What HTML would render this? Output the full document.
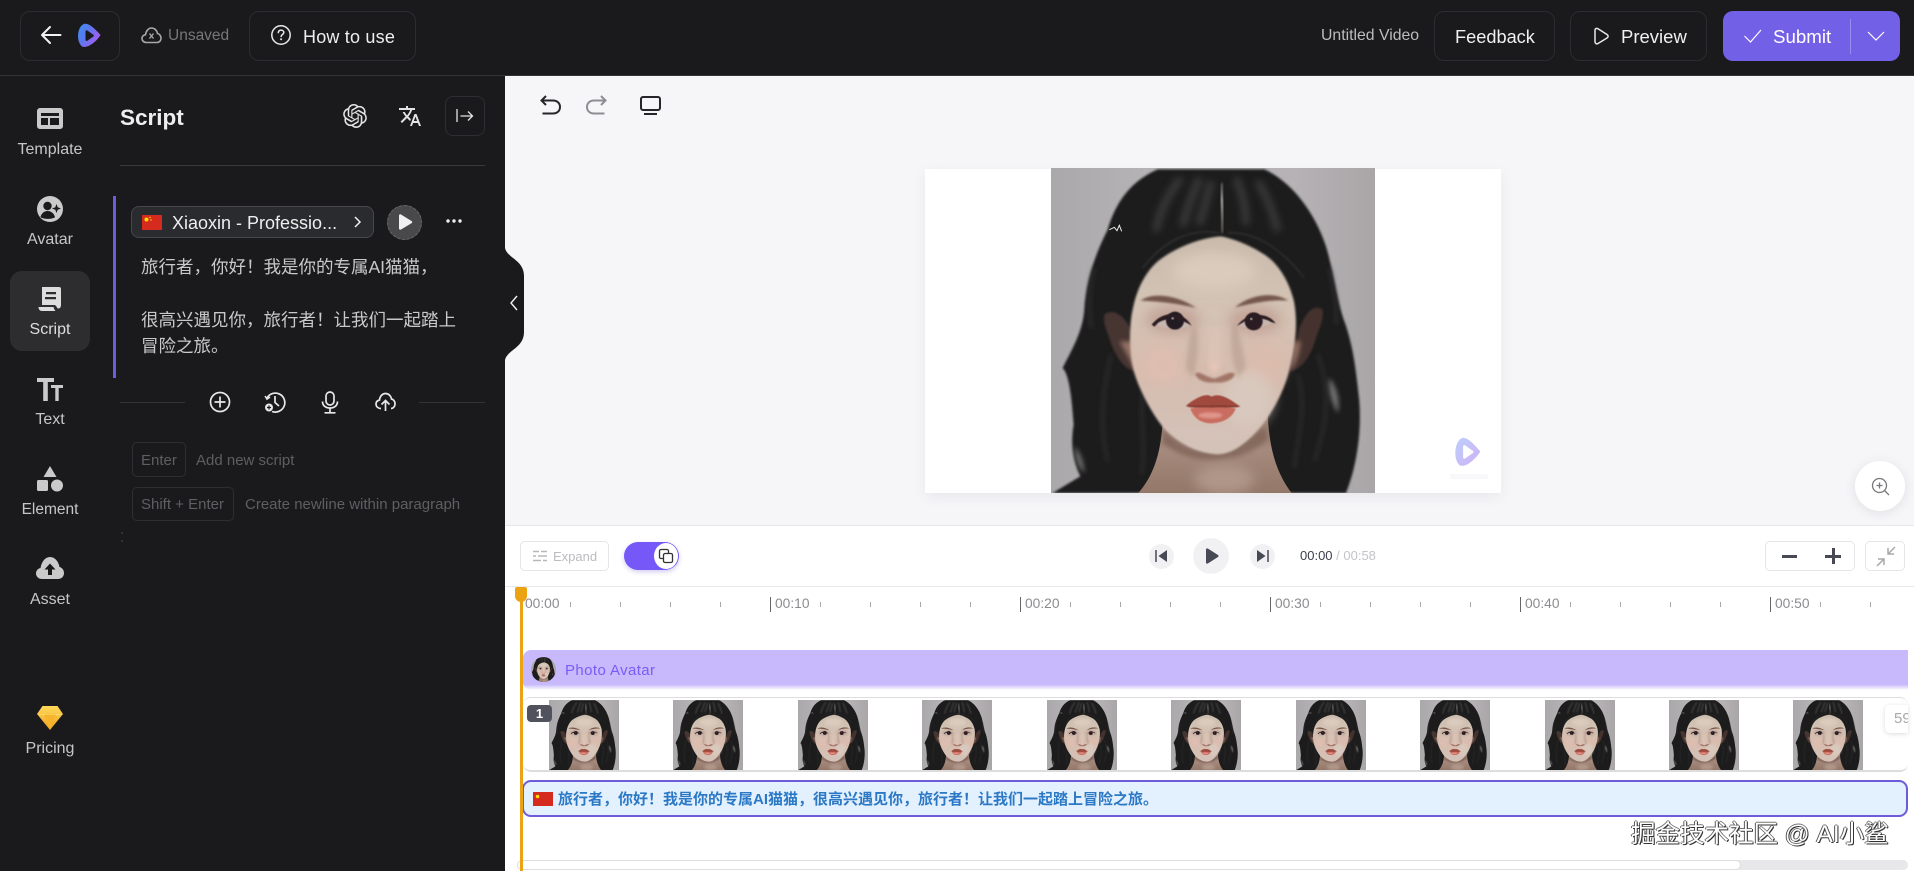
<!DOCTYPE html>
<html lang="en"><head><meta charset="utf-8"><title>Script editor</title>
<style>
*{box-sizing:border-box}
html,body{margin:0;padding:0;width:1914px;height:871px;overflow:hidden;background:#fff;font-family:"Liberation Sans","Noto Sans CJK SC",sans-serif}
.a{position:absolute}
.t{position:absolute;white-space:nowrap;line-height:20px;height:20px}
.btn{position:absolute;border:1px solid #2c2c30;border-radius:10px}
.side{position:absolute;left:0;width:100px;text-align:center;color:#c6c6c6;font-size:16px;line-height:20px;height:20px}
svg{position:absolute;overflow:visible}
</style></head><body>
<svg width="0" height="0" style="position:absolute"><defs>
<linearGradient id="lg" x1="0" y1="0" x2="1" y2=".6"><stop offset="0" stop-color="#3f8ff0"/><stop offset=".45" stop-color="#5a78ee"/><stop offset="1" stop-color="#a85cf2"/></linearGradient>
<linearGradient id="lg2" x1="0" y1="0" x2="1" y2="1"><stop offset="0" stop-color="#bcd0fa"/><stop offset="1" stop-color="#cfb0f6"/></linearGradient>
<linearGradient id="dia" x1="0" y1="0" x2="0" y2="1"><stop offset="0" stop-color="#ffd95a"/><stop offset="1" stop-color="#f0a020"/></linearGradient>
<linearGradient id="bgp" x1="0" y1="0" x2="1" y2="0"><stop offset="0" stop-color="#aaa8aa"/><stop offset=".3" stop-color="#b6b3b6"/><stop offset=".75" stop-color="#b6b2b5"/><stop offset="1" stop-color="#a9a6a8"/></linearGradient>
<linearGradient id="skin" x1="0" y1="0" x2="0" y2="1"><stop offset="0" stop-color="#c9baac"/><stop offset=".3" stop-color="#d3c3b5"/><stop offset=".6" stop-color="#d6bcae"/><stop offset="1" stop-color="#d4c3ba"/></linearGradient>
<linearGradient id="neck" x1="0" y1="0" x2="0" y2="1"><stop offset="0" stop-color="#8c7064"/><stop offset=".45" stop-color="#a58a7d"/><stop offset="1" stop-color="#937869"/></linearGradient>
<linearGradient id="parting" x1="0" y1="0" x2="0" y2="1"><stop offset="0" stop-color="#444"/><stop offset=".35" stop-color="#8f8d89"/><stop offset="1" stop-color="#4a4440"/></linearGradient>
<filter id="b1" x="-20%" y="-20%" width="140%" height="140%"><feGaussianBlur stdDeviation="1.200"/></filter>
<filter id="b2" x="-20%" y="-20%" width="140%" height="140%"><feGaussianBlur stdDeviation="3"/></filter>
<filter id="b5" x="-40%" y="-40%" width="180%" height="180%"><feGaussianBlur stdDeviation="7"/></filter>
<filter id="b8" x="-40%" y="-40%" width="180%" height="180%"><feGaussianBlur stdDeviation="11"/></filter>
<filter id="b12" x="-60%" y="-60%" width="220%" height="220%"><feGaussianBlur stdDeviation="18"/></filter>
<symbol id="face" viewBox="0 0 972 975" preserveAspectRatio="none">
<rect width="972" height="975" fill="url(#bgp)"/>
<path filter="url(#b2)" fill="#1a1a1c" d="M320,4 C240,40 195,100 170,185 C130,265 105,340 100,425 C96,490 60,550 35,600 C55,620 62,690 68,770 C58,830 66,880 88,925 L5,975 L885,975 C915,900 932,800 925,700 C915,610 908,540 882,465 C860,410 850,320 825,235 C790,130 720,40 640,4 Z"/>
<g fill="#a8a6a8" filter="url(#b5)" opacity=".6"><path d="M835,630 C860,660 868,700 860,735 C842,705 828,665 835,630Z"/><path d="M72,835 C92,862 100,890 100,915 C82,898 70,870 72,835Z"/></g>
<g fill="none" stroke="#38383a" stroke-width="8" filter="url(#b5)" opacity=".7"><path d="M180,560 C160,660 140,760 170,880"/><path d="M800,560 C840,660 830,760 790,880"/><path d="M130,300 C110,360 115,430 120,480"/><path d="M835,300 C850,360 860,420 855,470"/><path d="M740,620 C770,720 740,800 730,900"/><path d="M280,650 C260,750 290,830 270,920"/></g>
<path fill="url(#neck)" d="M335,760 C330,850 310,920 262,975 L722,975 C680,920 655,850 650,740 Z"/>
<path fill="#7a5e52" filter="url(#b5)" d="M340,790 C420,870 540,870 640,770 L650,815 C560,895 420,895 335,825 Z" opacity=".7"/>
<ellipse cx="520" cy="935" rx="90" ry="45" fill="#b89f92" opacity=".75" filter="url(#b12)"/>
<path fill="#473530" filter="url(#b2)" d="M160,440 C185,420 225,440 245,500 L258,610 C225,610 195,570 178,520 C170,490 155,470 160,440Z"/>
<path fill="#45332d" filter="url(#b2)" d="M815,425 C795,410 770,420 745,480 L715,610 C755,605 780,560 795,510 C805,480 818,460 815,425Z"/>
<path fill="#a5806f" opacity=".8" filter="url(#b5)" d="M205,520 C225,550 240,585 255,605 L250,520Z"/>
<path fill="#a5806f" opacity=".75" filter="url(#b5)" d="M750,520 C745,560 735,590 718,608 L725,520Z"/>
<path fill="url(#skin)" filter="url(#b2)" d="M510,205 C450,208 370,240 320,280 C280,315 256,370 246,420 C234,470 234,550 246,600 C258,650 296,730 342,785 C382,825 440,857 500,859 C540,859 582,830 622,785 C668,730 698,670 714,610 C732,540 742,470 729,400 C714,340 684,290 644,262 C604,235 550,212 510,205Z"/>
<ellipse cx="490" cy="310" rx="125" ry="55" fill="#dacbbd" filter="url(#b12)"/>
<ellipse cx="335" cy="590" rx="62" ry="62" fill="#dfbeb0" opacity=".85" filter="url(#b12)"/>
<ellipse cx="640" cy="590" rx="58" ry="62" fill="#dcbcad" opacity=".85" filter="url(#b12)"/>
<ellipse cx="590" cy="690" rx="75" ry="85" fill="#d9cbc0" opacity=".8" filter="url(#b12)"/>
<ellipse cx="365" cy="455" rx="80" ry="40" fill="#bf9f92" opacity=".85" filter="url(#b12)"/>
<ellipse cx="612" cy="455" rx="78" ry="40" fill="#bf9f92" opacity=".85" filter="url(#b12)"/>
<path fill="#ad9485" opacity=".5" filter="url(#b5)" d="M432,470 C450,520 440,580 425,630 L405,600 C410,540 415,490 432,470Z"/>
<path fill="#ad9485" opacity=".5" filter="url(#b5)" d="M548,460 C530,520 545,580 560,630 L585,600 C575,540 565,490 548,460Z"/>
<path fill="#dcc4b6" opacity=".8" filter="url(#b5)" d="M472,480 L508,480 L512,590 L470,590Z"/>
<ellipse cx="490" cy="596" rx="16" ry="20" fill="#e4c5b7" filter="url(#b5)"/>
<path fill="#a07668" filter="url(#b2)" d="M432,618 C442,606 455,622 490,632 C520,622 538,606 552,618 C545,640 512,646 490,643 C465,646 440,638 432,618Z"/>
<path fill="#75574c" filter="url(#b2)" d="M268,398 C310,370 380,383 436,420 C385,408 325,400 268,398Z"/>
<path fill="#75574c" filter="url(#b2)" d="M552,418 C600,378 670,370 712,398 C660,394 612,404 552,418Z"/>
<path fill="#c7b5af" filter="url(#b1)" d="M308,464 C340,438 395,438 420,472 C390,488 335,488 308,464Z"/>
<path fill="#c7b5af" filter="url(#b1)" d="M562,472 C590,440 640,440 668,460 C640,482 590,484 562,472Z"/>
<circle cx="372" cy="458" r="27" fill="#241a22" filter="url(#b1)"/><circle cx="608" cy="460" r="27" fill="#2c1e20" filter="url(#b1)"/>
<path fill="#2a1e20" filter="url(#b1)" d="M302,470 C335,426 398,428 422,474 C392,450 345,448 322,464 L310,476Z"/>
<path fill="#2a1e20" filter="url(#b1)" d="M558,474 C590,430 650,432 674,466 L660,462 C640,448 600,448 578,462 Z"/>
<circle cx="365" cy="451" r="4" fill="#bbb" opacity=".6"/><circle cx="601" cy="453" r="4" fill="#bbb" opacity=".6"/>
<path fill="#c96d60" filter="url(#b1)" d="M418,722 C460,712 520,712 554,722 C545,750 512,766 480,766 C450,766 428,750 418,722Z"/>
<path fill="#a04a3e" filter="url(#b1)" d="M404,714 C430,692 465,672 482,686 C505,672 540,695 568,716 C520,722 500,716 480,720 C455,716 430,722 404,714Z"/>
<ellipse cx="478" cy="742" rx="36" ry="9" fill="#e0958a" filter="url(#b2)"/>
<path d="M412,716 C450,720 465,710 482,714 C505,710 530,718 562,716" fill="none" stroke="#6e3029" stroke-width="4" filter="url(#b2)"/>
<g fill="none" stroke="#5e5e5e" stroke-width="20" opacity=".5" filter="url(#b8)"><path d="M390,30 C350,80 325,130 315,190"/><path d="M445,30 C425,80 405,130 395,175"/><path d="M480,40 C470,90 455,130 445,170"/><path d="M555,30 C575,80 585,120 585,170"/><path d="M620,40 C650,90 665,130 680,190"/></g>
<g fill="none" stroke="#3a3a3c" stroke-width="3" filter="url(#b2)"><path d="M505,195 C420,180 340,215 275,300"/><path d="M530,195 C610,190 690,240 760,330"/></g>
<path d="M512,45 C506,90 520,130 515,195" stroke="url(#parting)" stroke-width="13" fill="none" filter="url(#b2)"/>
<path d="M175,185 L190,178 L198,188 L205,172 L212,190" fill="none" stroke="#eee" stroke-width="3"/>
</symbol>
</defs></svg>

<!-- top bar -->
<div class="a" style="left:0;top:0;width:1914px;height:76px;background:#1a1a1d;border-bottom:1px solid #333336"></div>
<div class="btn" style="left:20px;top:11px;width:100px;height:50px"></div>
<svg style="left:40px;top:24px" width="22" height="22" viewBox="0 0 22 22"><path d="M20.500 11H2M10 3L2 11l8 8" fill="none" stroke="#f2f2f2" stroke-width="2" stroke-linecap="round" stroke-linejoin="round"/></svg>
<svg style="left:76px;top:23px" width="25" height="25" viewBox="0 0 25 25"><path d="M8 1C1.500 3-.5 18 6 23.500c5.500 2.500 15-5.500 18.500-11.500C19.500 6.500 13-.5 8 1Z" fill="url(#lg)"/><path d="M9.500 8.500c0-1 1-1.500 1.800-1l6 4.200c.8.500.8 1.300 0 1.800l-6 4.200c-.8.500-1.800 0-1.800-1Z" fill="#1a1a1d"/></svg>
<svg style="left:141px;top:25px" width="21" height="21" viewBox="0 0 21 21"><path d="M5.500 17.500C2.500 17.500 1 15.500 1 13.500c0-2 1.500-3.500 3.500-3.800C5 6 7.500 3 10.500 3c3.200 0 5.500 2.500 6 5.500 2 .3 3.500 2.500 3.500 4.700 0 2.300-1.500 4.300-4 4.300Z" fill="none" stroke="#a8a8a8" stroke-width="1.600"/><path d="M8.500 8.500l4 5M12.500 8.500l-4 5" stroke="#a8a8a8" stroke-width="1.400"/></svg>
<div class="t" style="left:168px;top:26px;font-size:15.500px;color:#77777a">Unsaved</div>
<div class="btn" style="left:249px;top:11px;width:167px;height:50px"></div>
<svg style="left:271px;top:25px" width="20" height="20" viewBox="0 0 20 20"><circle cx="10" cy="10" r="9.200" fill="none" stroke="#e8e8e8" stroke-width="1.500"/><path d="M7.300 7.600c.2-1.600 1.400-2.500 2.800-2.500 1.500 0 2.700 1 2.700 2.400 0 2-2.700 2-2.700 4" fill="none" stroke="#e8e8e8" stroke-width="1.500" stroke-linecap="round"/><circle cx="10.100" cy="14.300" r="1" fill="#e8e8e8"/></svg>
<div class="t" style="left:303px;top:27px;font-size:18px;color:#eee;letter-spacing:.2px">How to use</div>

<div class="t" style="left:1321px;top:26px;font-size:15.800px;color:#bcbcbc">Untitled Video</div>
<div class="btn" style="left:1434px;top:11px;width:121px;height:50px"></div>
<div class="t" style="left:1455px;top:27px;font-size:18.200px;color:#f0f0f0">Feedback</div>
<div class="btn" style="left:1570px;top:11px;width:137px;height:50px"></div>
<svg style="left:1593px;top:27px" width="17" height="18" viewBox="0 0 17 18"><path d="M2 3.500C2 1.500 3.500 1 5 1.800l9 5.700c1.500 1 1.500 2.500 0 3.500l-9 5.500C3.500 17.300 2 16.500 2 14.800Z" fill="none" stroke="#e8e8e8" stroke-width="1.500"/></svg>
<div class="t" style="left:1621px;top:27px;font-size:18.500px;color:#f0f0f0">Preview</div>
<div class="a" style="left:1723px;top:11px;width:177px;height:50px;background:#7260e6;border-radius:10px"></div>
<div class="a" style="left:1850px;top:19px;width:1px;height:35px;background:#9a8df0"></div>
<svg style="left:1743px;top:27px" width="20" height="18" viewBox="0 0 20 18"><path d="M1.500 9l6 6L18 3" fill="none" stroke="#fff" stroke-width="1.200"/></svg>
<div class="t" style="left:1773px;top:27px;font-size:18.700px;color:#fff">Submit</div>
<svg style="left:1866px;top:29px" width="20" height="14" viewBox="0 0 20 14"><path d="M2 3l8 8 8-8" fill="none" stroke="#fff" stroke-width="1.200"/></svg>

<!-- left -->
<div class="a" style="left:0;top:76px;width:505px;height:795px;background:#1a1a1d"></div>
<div class="a" style="left:10px;top:271px;width:80px;height:80px;background:#2d2d30;border-radius:12px"></div>
<svg style="left:37px;top:108px" width="26" height="22" viewBox="0 0 26 22"><rect width="26" height="21" rx="3" fill="#cacaca"/><path d="M4 5h18v3H4ZM4 10h7v7H4ZM13 10h9v7h-9Z" fill="#1a1a1d"/></svg>
<div class="side" style="top:140px">Template</div>
<svg style="left:37px;top:196px" width="26" height="26" viewBox="0 0 26 26"><circle cx="13" cy="13" r="13" fill="#cacaca"/><circle cx="10.500" cy="10" r="4.200" fill="#1a1a1d"/><path d="M3.500 21c1-4 4-6 7-6s6 1.500 7.500 6c-2 2.500-12 2.500-14.500 0Z" fill="#1a1a1d"/><path d="M19.500 8l1.200 3.300 3.300 1.200-3.300 1.200-1.200 3.300-1.200-3.300-3.300-1.200 3.300-1.200Z" fill="#1a1a1d"/></svg>
<div class="side" style="top:230px">Avatar</div>
<svg style="left:37px;top:285px" width="26" height="28" viewBox="0 0 26 28"><path d="M5 2h17c1.500 0 2 1 2 2v16c0 2-1 3.500-2.500 3.500-1 0-1.500-.5-2-2L18 20H5Z" fill="#ddd"/><path d="M9 7h10v2.200H9ZM8 12h11v2.200H8Z" fill="#2d2d30"/><path d="M1.500 22h15c.5 2 1.200 3 2 4H5c-2 0-3.500-1.500-3.500-4Z" fill="#ddd"/></svg>
<div class="side" style="top:320px;color:#ddd">Script</div>
<svg style="left:37px;top:378px" width="26" height="23" viewBox="0 0 26 23"><path d="M0 0h17v4h-6.200v19H6.200V4H0ZM14 7h12v3h-4.300v13h-3.400V10H14Z" fill="#cacaca"/></svg>
<div class="side" style="top:410px">Text</div>
<svg style="left:37px;top:466px" width="26" height="26" viewBox="0 0 26 26"><path d="M13 0l6.500 11h-13Z" fill="#cacaca"/><rect y="14" width="11" height="11" rx="1.500" fill="#cacaca"/><circle cx="20" cy="19.500" r="6" fill="#cacaca"/></svg>
<div class="side" style="top:500px;font-size:15.500px">Element</div>
<svg style="left:36px;top:557px" width="28" height="22" viewBox="0 0 28 22"><path d="M6 22C2.500 22 0 19.500 0 16.500 0 13.500 2 11.500 4.500 11 5.500 5 9 0 14 0c5 0 8.500 4.500 9.500 10 2.500.5 4.500 3 4.500 6 0 3.500-2.500 6-6 6Z" fill="#cacaca"/><path d="M14 6.500l5.500 6H16V18h-4v-5.500H8.500Z" fill="#1a1a1d"/></svg>
<div class="side" style="top:590px">Asset</div>
<svg style="left:37px;top:706px" width="26" height="24" viewBox="0 0 26 24"><path d="M5.500 0h15L26 8 13 24 0 8Z" fill="url(#dia)"/><path d="M0 8h26L13 10Z" fill="#ffe98f" opacity=".8"/><path d="M7 8.500h12L13 24Z" fill="#f6b52c"/></svg>
<div class="side" style="top:739px">Pricing</div>

<div class="t" style="left:120px;top:105px;height:26px;line-height:26px;font-size:22.500px;font-weight:700;color:#eee">Script</div>
<svg style="left:343px;top:104px" width="24" height="24" viewBox="0 0 24 24"><path fill="#e4e4e4" d="M22.2819 9.8211a5.9847 5.9847 0 0 0-.5157-4.9108 6.0462 6.0462 0 0 0-6.5098-2.9A6.0651 6.0651 0 0 0 4.9807 4.1818a5.9847 5.9847 0 0 0-3.9977 2.9 6.0462 6.0462 0 0 0 .7427 7.0966 5.98 5.98 0 0 0 .511 4.9107 6.051 6.051 0 0 0 6.5146 2.9001A5.9847 5.9847 0 0 0 13.2599 24a6.0557 6.0557 0 0 0 5.7718-4.2058 5.9894 5.9894 0 0 0 3.9977-2.9001 6.0557 6.0557 0 0 0-.7475-7.0729zm-9.022 12.6081a4.4755 4.4755 0 0 1-2.8764-1.0408l.1419-.0804 4.7783-2.7582a.7948.7948 0 0 0 .3927-.6813v-6.7369l2.02 1.1686a.071.071 0 0 1 .038.052v5.5826a4.504 4.504 0 0 1-4.4945 4.4944zm-9.6607-4.1254a4.4708 4.4708 0 0 1-.5346-3.0137l.142.0852 4.783 2.7582a.7712.7712 0 0 0 .7806 0l5.8428-3.3685v2.3324a.0804.0804 0 0 1-.0332.0615L9.74 19.9502a4.4992 4.4992 0 0 1-6.1408-1.6464zM2.3408 7.8956a4.485 4.485 0 0 1 2.3655-1.9728V11.6a.7664.7664 0 0 0 .3879.6765l5.8144 3.3543-2.0201 1.1685a.0757.0757 0 0 1-.071 0l-4.8303-2.7865A4.504 4.504 0 0 1 2.3408 7.872zm16.5963 3.8558L13.1038 8.364 15.1192 7.2a.0757.0757 0 0 1 .071 0l4.8303 2.7913a4.4944 4.4944 0 0 1-.6765 8.1042v-5.6772a.79.79 0 0 0-.407-.667zm2.0107-3.0231l-.142-.0852-4.7735-2.7818a.7759.7759 0 0 0-.7854 0L9.409 9.2297V6.8974a.0662.0662 0 0 1 .0284-.0615l4.8303-2.7866a4.4992 4.4992 0 0 1 6.6802 4.66zM8.3065 12.863l-2.02-1.1638a.0804.0804 0 0 1-.038-.0567V6.0742a4.4992 4.4992 0 0 1 7.3757-3.4537l-.142.0805L8.704 5.459a.7948.7948 0 0 0-.3927.6813zm1.0976-2.3654l2.602-1.4998 2.6069 1.4998v2.9994l-2.5974 1.4997-2.6067-1.4997Z"/></svg>
<svg style="left:398px;top:104px" width="24" height="24" viewBox="0 0 24 24"><path fill="#e4e4e4" d="M12.870 15.070l-2.540-2.510.03-.03c1.740-1.940 2.980-4.170 3.710-6.530H17V4h-7V2H8v2H1v1.990h11.170C11.500 7.920 10.440 9.750 9 11.350 8.070 10.320 7.300 9.190 6.690 8h-2c.73 1.630 1.730 3.170 2.980 4.560l-5.090 5.020L4 19l5-5 3.110 3.110.76-2.040zM18.500 10h-2L12 22h2l1.120-3h4.750L21 22h2l-4.500-12zm-2.620 7l1.620-4.330L19.120 17h-3.240z"/></svg>
<div class="a" style="left:445px;top:96px;width:40px;height:40px;border:1px solid #2f2f33;border-radius:8px"></div>
<svg style="left:456px;top:107px" width="18" height="18" viewBox="0 0 18 18"><path d="M1 2v13M4.500 9H16.500M12 4.500L16.500 9 12 13.500" fill="none" stroke="#e4e4e4" stroke-width="1.300"/></svg>
<div class="a" style="left:120px;top:165px;width:365px;height:1px;background:#3a3a3d"></div>
<div class="a" style="left:113px;top:196px;width:3px;height:182px;background:#6c5ce0"></div>
<div class="a" style="left:131px;top:206px;width:243px;height:32px;background:#2a2b2e;border:1px solid #47484c;border-radius:8px"></div>
<svg style="left:142px;top:215px" width="20" height="15" viewBox="0 0 20 15"><rect width="20" height="15" fill="#d52b1e"/><circle cx="4.500" cy="4.500" r="2" fill="#ffde00"/><circle cx="8" cy="2.500" r=".7" fill="#ffde00"/><circle cx="9" cy="5" r=".7" fill="#ffde00"/></svg>
<div class="t" style="left:172px;top:213px;font-size:18px;color:#eee">Xiaoxin - Professio...</div>
<svg style="left:353px;top:215px" width="10" height="14" viewBox="0 0 10 14"><path d="M2 2l5 5-5 5" fill="none" stroke="#eee" stroke-width="1.500"/></svg>
<div class="a" style="left:387px;top:205px;width:35px;height:35px;border-radius:50%;background:#49494c;border:1px dashed #6a6a6d"></div>
<svg style="left:397px;top:214px" width="16" height="16" viewBox="0 0 16 16"><path d="M2 1.500c0-1 1-1.500 2-1l10.500 6.500c1 .6 1 1.600 0 2.200L4 15.500c-1 .5-2 0-2-1Z" fill="#f0f0f0"/></svg>
<svg style="left:446px;top:219px" width="16" height="4" viewBox="0 0 16 4"><circle cx="2" cy="2" r="1.700" fill="#eee"/><circle cx="8" cy="2" r="1.700" fill="#eee"/><circle cx="14" cy="2" r="1.700" fill="#eee"/></svg>
<div class="t" style="left:141px;top:254px;height:26px;line-height:26px;font-size:17.500px;color:#c9c9c9">旅行者，你好！我是你的专属AI猫猫，</div>
<div class="t" style="left:141px;top:307px;height:26px;line-height:26px;font-size:17.500px;color:#c9c9c9">很高兴遇见你，旅行者！让我们一起踏上</div>
<div class="t" style="left:141px;top:333px;height:26px;line-height:26px;font-size:17.500px;color:#c9c9c9">冒险之旅。</div>
<div class="a" style="left:120px;top:402px;width:65px;height:1px;background:#333336"></div>
<div class="a" style="left:419px;top:402px;width:66px;height:1px;background:#333336"></div>
<svg style="left:209px;top:391px" width="22" height="22" viewBox="0 0 22 22"><circle cx="11" cy="11" r="9.500" fill="none" stroke="#e8e8e8" stroke-width="1.700"/><path d="M11 5.500v11M5.500 11h11" stroke="#e8e8e8" stroke-width="1.700"/></svg>
<svg style="left:264px;top:391px" width="22" height="22" viewBox="0 0 22 22"><path d="M3 7a9.500 9.500 0 1 1 5 13.500" fill="none" stroke="#e8e8e8" stroke-width="1.700"/><path d="M1 5l2 3.200L6 6" fill="none" stroke="#e8e8e8" stroke-width="1.500"/><path d="M11 5v6.500l4 3.500" fill="none" stroke="#e8e8e8" stroke-width="1.700"/><circle cx="5" cy="16.500" r="4" fill="#e8e8e8"/><path d="M5 14.500v4M3 16.500h4" stroke="#1a1a1d" stroke-width="1.200"/></svg>
<svg style="left:321px;top:391px" width="18" height="23" viewBox="0 0 18 23"><rect x="5" y="1" width="8" height="13" rx="4" fill="none" stroke="#e8e8e8" stroke-width="1.700"/><path d="M1.500 10.500c0 4 3 6.500 7.500 6.500s7.500-2.500 7.500-6.500M9 17v4M3.500 21.800h11" fill="none" stroke="#e8e8e8" stroke-width="1.700"/></svg>
<svg style="left:375px;top:392px" width="21" height="20" viewBox="0 0 21 20"><path d="M6 16.500C3 16.500 1 14.500 1 12c0-2 1.500-3.500 3.500-4C5 4 7.500 1.500 10.500 1.500c3.200 0 5.500 2.500 6 5.500 2 .3 3.500 2.500 3.500 4.700 0 2.500-1.500 4.800-4 4.800" fill="none" stroke="#e8e8e8" stroke-width="1.700"/><path d="M10.500 19V9M6.500 12.500l4-4 4 4" fill="none" stroke="#e8e8e8" stroke-width="1.700"/></svg>
<div class="a" style="left:132px;top:442px;width:54px;height:35px;border:1px solid #2e2e31;border-radius:5px"></div>
<div class="t" style="left:141px;top:451px;font-size:15px;color:#5f5f62">Enter</div>
<div class="t" style="left:196px;top:451px;font-size:15px;color:#5f5f62">Add new script</div>
<div class="a" style="left:132px;top:487px;width:102px;height:34px;border:1px solid #2e2e31;border-radius:5px"></div>
<div class="t" style="left:141px;top:495px;font-size:15px;color:#5f5f62">Shift + Enter</div>
<div class="t" style="left:245px;top:495px;font-size:15px;color:#5f5f62">Create newline within paragraph</div>
<div class="a" style="left:121px;top:532px;width:2px;height:2px;background:#333"></div>
<div class="a" style="left:121px;top:540px;width:2px;height:2px;background:#333"></div>

<!-- preview -->
<div class="a" style="left:505px;top:76px;width:1409px;height:450px;background:#f6f6f9"></div>
<div class="a" style="left:505px;top:525px;width:1409px;height:1px;background:#e7e7ea"></div>
<svg style="left:540px;top:94px" width="22" height="24" viewBox="0 0 22 24"><path d="M6 2L1.500 6.500 6 11M1.500 6.500H13c4 0 7 2.500 7 6.500s-3 6.500-7 6.500H2.500" fill="none" stroke="#26262a" stroke-width="2"/></svg>
<svg style="left:585px;top:94px" width="22" height="24" viewBox="0 0 22 24"><path d="M16 2l4.500 4.500L16 11M20.500 6.500H9c-4 0-7 2.500-7 6.500s3 6.500 7 6.500h10.500" fill="none" stroke="#8d8d92" stroke-width="2"/></svg>
<svg style="left:640px;top:96px" width="21" height="20" viewBox="0 0 21 20"><rect x="1" y="1" width="19" height="13" rx="2" fill="none" stroke="#26262a" stroke-width="2"/><path d="M4 18h13" stroke="#26262a" stroke-width="2"/></svg>
<div class="a" style="left:925px;top:169px;width:576px;height:324px;background:#fff;box-shadow:0 4px 14px rgba(0,0,0,.06)"></div>
<svg style="left:1051px;top:168px" width="324" height="325"><use href="#face" width="324" height="325"/></svg>
<svg style="left:1453px;top:437px" width="28" height="30" viewBox="0 0 25 27"><path d="M8 1C1.500 3-.5 20 6 25.500c5.500 2.500 15-6.500 18.500-12.500C19.500 7.500 13-.5 8 1Z" fill="url(#lg2)"/><path d="M9 8.500c0-1 1-1.500 1.800-1l7 5c.8.500.8 1.300 0 1.800l-7 5c-.8.500-1.800 0-1.800-1Z" fill="#fff"/></svg>
<div class="a" style="left:1450px;top:474px;width:38px;height:5px;background:#f8f8fa;border-radius:2px"></div>
<svg style="left:505px;top:248px" width="20" height="112" viewBox="0 0 20 112"><path d="M0 0C2 10 19 12 19 28V84C19 100 2 102 0 112Z" fill="#1a1a1d"/><path d="M12 48l-6 7 6 7" fill="none" stroke="#f2f2f2" stroke-width="1.400"/></svg>
<div class="a" style="left:1855px;top:461px;width:50px;height:50px;background:#fff;border-radius:50%;box-shadow:0 2px 12px rgba(0,0,0,.09)"></div>
<svg style="left:1871px;top:477px" width="19" height="19" viewBox="0 0 19 19"><circle cx="8.500" cy="8.500" r="7" fill="none" stroke="#77777c" stroke-width="1.300"/><path d="M8.500 5.500v6M5.500 8.500h6M13.500 13.500L18 18" fill="none" stroke="#77777c" stroke-width="1.300"/></svg>

<!-- toolbar -->
<div class="a" style="left:505px;top:526px;width:1409px;height:345px;background:#fff"></div>
<div class="a" style="left:505px;top:586px;width:1409px;height:1px;background:#e9e9ec"></div>
<div class="a" style="left:520px;top:541px;width:89px;height:30px;border:1px solid #e6e6e9;border-radius:5px"></div>
<svg style="left:533px;top:550px" width="14" height="12" viewBox="0 0 14 12"><path d="M0 1.500h6M8 1.500h6M0 6h3M5 6h9M0 10.500h8M10 10.500h4" stroke="#b8b8bc" stroke-width="1.500"/></svg>
<div class="t" style="left:553px;top:547px;font-size:13px;color:#bcbcc0">Expand</div>
<div class="a" style="left:624px;top:542px;width:55px;height:28px;background:#7658f8;border-radius:14px;box-shadow:0 2px 5px rgba(80,60,200,.25)"></div>
<div class="a" style="left:654px;top:543px;width:24px;height:26px;background:#fff;border-radius:50%"></div>
<svg style="left:658px;top:548px" width="16" height="16" viewBox="0 0 16 16"><rect x="1.500" y="1.500" width="9" height="9" rx="1.500" fill="none" stroke="#333" stroke-width="1.300"/><rect x="5.500" y="5.500" width="9" height="9" rx="1.500" fill="#fff" stroke="#333" stroke-width="1.300"/></svg>
<div class="a" style="left:1149px;top:544px;width:25px;height:25px;border-radius:50%;background:#f1f1f3"></div>
<div class="a" style="left:1193px;top:538px;width:36px;height:36px;border-radius:50%;background:#f1f1f3"></div>
<div class="a" style="left:1250px;top:544px;width:25px;height:25px;border-radius:50%;background:#f1f1f3"></div>
<svg style="left:1155px;top:550px" width="13" height="12" viewBox="0 0 13 12"><path d="M1 0v12" stroke="#474955" stroke-width="1.500"/><path d="M12 0v12L3.500 6Z" fill="#474955"/></svg>
<svg style="left:1205px;top:548px" width="14" height="16" viewBox="0 0 14 16"><path d="M1 1.500C1 .5 2 0 3 .6L13 7c.8.5.8 1.500 0 2L3 15.400C2 16 1 15.500 1 14.500Z" fill="#474955"/></svg>
<svg style="left:1256px;top:550px" width="13" height="12" viewBox="0 0 13 12"><path d="M12 0v12" stroke="#474955" stroke-width="1.500"/><path d="M1 0v12l8.500-6Z" fill="#474955"/></svg>
<div class="t" style="left:1300px;top:546px;font-size:13px;color:#3c3e4a">00:00 <span style="color:#c4c4c8">/ 00:58</span></div>
<div class="a" style="left:1765px;top:541px;width:90px;height:30px;border:1px solid #e6e6e9;border-radius:5px"></div>
<div class="a" style="left:1782px;top:555px;width:15px;height:2.500px;background:#474955"></div>
<div class="a" style="left:1825px;top:555px;width:16px;height:2.500px;background:#474955"></div>
<div class="a" style="left:1832px;top:548px;width:2.500px;height:16px;background:#474955"></div>
<div class="a" style="left:1865px;top:541px;width:40px;height:30px;border:1px solid #e6e6e9;border-radius:5px"></div>
<svg style="left:1876px;top:547px" width="20" height="19" viewBox="0 0 20 19"><path d="M12 1v6h6M12 7l7-7" fill="none" stroke="#a8a8ac" stroke-width="1.500"/><path d="M8 18v-6H2M8 12l-7 7" fill="none" stroke="#a8a8ac" stroke-width="1.500"/></svg>

<!-- ruler -->
<svg style="left:505px;top:587px" width="1409" height="30">
<g stroke="#a8a8ac" stroke-width="1">
<path d="M65.500 15v5M115.500 15v5M165.500 15v5M215.500 15v5M315.500 15v5M365.500 15v5M415.500 15v5M465.500 15v5M565.500 15v5M615.500 15v5M665.500 15v5M715.500 15v5M815.500 15v5M865.500 15v5M915.500 15v5M965.500 15v5M1065.500 15v5M1115.500 15v5M1165.500 15v5M1215.500 15v5M1315.500 15v5M1365.500 15v5"/>
<path stroke="#666" d="M265.500 10v15M515.500 10v15M765.500 10v15M1015.500 10v15M1265.500 10v15"/>
</g></svg>
<div class="t" style="left:525px;top:594px;font-size:13.800px;color:#8c8c90">00:00</div>
<div class="t" style="left:775px;top:594px;font-size:13.800px;color:#8c8c90">00:10</div>
<div class="t" style="left:1025px;top:594px;font-size:13.800px;color:#8c8c90">00:20</div>
<div class="t" style="left:1275px;top:594px;font-size:13.800px;color:#8c8c90">00:30</div>
<div class="t" style="left:1525px;top:594px;font-size:13.800px;color:#8c8c90">00:40</div>
<div class="t" style="left:1775px;top:594px;font-size:13.800px;color:#8c8c90">00:50</div>

<!-- tracks -->
<div class="a" style="left:523px;top:650px;width:1385px;height:40px;border-radius:8px 0 0 8px;background:linear-gradient(#c7b9fc 0,#c7b9fc 86%,#fff 100%)"></div>
<svg style="left:531px;top:657px" width="25" height="25"><defs><clipPath id="cp"><circle cx="12.500" cy="12.500" r="12.500"/></clipPath></defs><g clip-path="url(#cp)"><use href="#face" width="25" height="25"/></g></svg>
<div class="t" style="left:565px;top:661px;font-size:15px;color:#7a5cf5;letter-spacing:.4px">Photo Avatar</div>

<div class="a" style="left:523px;top:697px;width:1385px;height:75px;background:#fff;border-top:1px solid #ddd;border-bottom:2px solid #ddd;border-radius:8px"></div>
<svg style="left:549px;top:700px" width="70" height="70"><use href="#face" width="70" height="70"/></svg>
<svg style="left:673px;top:700px" width="70" height="70"><use href="#face" width="70" height="70"/></svg>
<svg style="left:798px;top:700px" width="70" height="70"><use href="#face" width="70" height="70"/></svg>
<svg style="left:922px;top:700px" width="70" height="70"><use href="#face" width="70" height="70"/></svg>
<svg style="left:1047px;top:700px" width="70" height="70"><use href="#face" width="70" height="70"/></svg>
<svg style="left:1171px;top:700px" width="70" height="70"><use href="#face" width="70" height="70"/></svg>
<svg style="left:1296px;top:700px" width="70" height="70"><use href="#face" width="70" height="70"/></svg>
<svg style="left:1420px;top:700px" width="70" height="70"><use href="#face" width="70" height="70"/></svg>
<svg style="left:1545px;top:700px" width="70" height="70"><use href="#face" width="70" height="70"/></svg>
<svg style="left:1669px;top:700px" width="70" height="70"><use href="#face" width="70" height="70"/></svg>
<svg style="left:1793px;top:700px" width="70" height="70"><use href="#face" width="70" height="70"/></svg>
<div class="a" style="left:527px;top:705px;width:25px;height:17px;background:#50525e;border-radius:4px;color:#fff;font-size:13px;font-weight:700;line-height:17px;text-align:center">1</div>
<div class="a" style="left:1885px;top:705px;width:23px;height:28px;background:#fff;border-radius:5px 0 0 5px;box-shadow:0 1px 5px rgba(0,0,0,.14);overflow:hidden;color:#a8a8ac;font-size:15px;line-height:28px;padding-left:9px">59</div>

<div class="a" style="left:522px;top:780px;width:1386px;height:37px;background:#e3f1ff;border:2px solid #6e5bd9;border-radius:9px"></div>
<svg style="left:533px;top:792px" width="20" height="14" viewBox="0 0 20 14"><rect width="20" height="14" fill="#d52b1e"/><circle cx="4.500" cy="4.500" r="1.800" fill="#ffde00"/></svg>
<div class="t" style="left:558px;top:790px;font-size:15px;font-weight:700;color:#2b78c5">旅行者，你好！我是你的专属AI猫猫，很高兴遇见你，旅行者！让我们一起踏上冒险之旅。</div>

<!-- scrollbar -->
<div class="a" style="left:517px;top:860px;width:1391px;height:10px;background:#e8e8ea;border-radius:5px"></div>
<div class="a" style="left:517px;top:860px;width:1224px;height:10px;background:#fff;border:1px solid #ddd;border-radius:5px"></div>
<!-- playhead -->
<div class="a" style="left:520px;top:590px;width:3px;height:281px;background:#eba313"></div>
<div class="a" style="left:515px;top:587px;width:12px;height:15px;background:#eba313;border-radius:2px 2px 6px 6px"></div>

<div class="t" style="left:1631px;top:821px;height:28px;line-height:28px;font-size:24.500px;color:#fff;text-shadow:1px 1px 0 #333,-1px 0 0 #555,0 -1px 0 #777,1px 0 0 #555">掘金技术社区 @ AI小鲨</div>
</body></html>
